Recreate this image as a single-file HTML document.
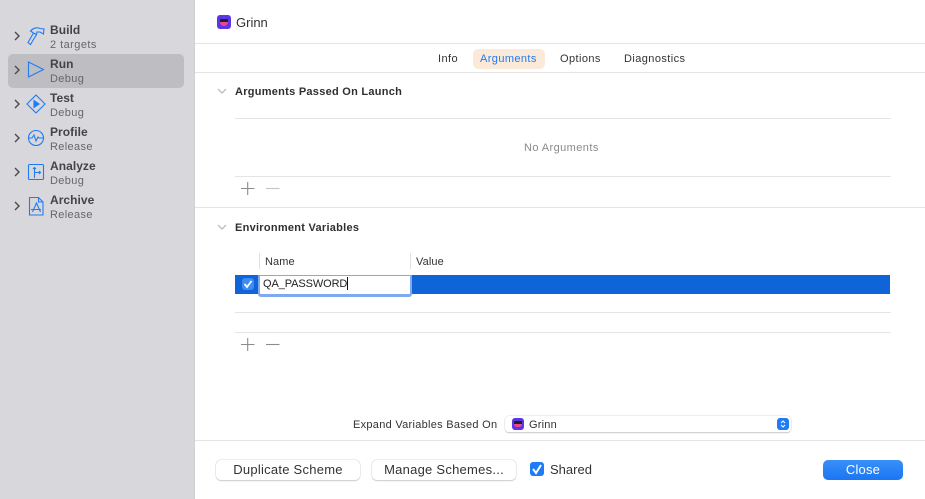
<!DOCTYPE html>
<html><head><meta charset="utf-8">
<style>
html,body{margin:0;padding:0}
body{width:925px;height:499px;overflow:hidden;position:relative;background:#fff;font-family:"Liberation Sans",sans-serif;color:#303030}
.a{position:absolute;white-space:nowrap}
.hl{position:absolute;height:1px;background:#e4e4e4}
#side{position:absolute;left:0;top:0;width:194px;height:499px;background:#d8d7dc;border-right:1px solid #cfcfd1}
.t{position:absolute;left:50px;font-size:12px;font-weight:bold;color:#444;line-height:14px;letter-spacing:.05px}
.s{position:absolute;left:50px;font-size:11px;color:#67676a;line-height:13px;letter-spacing:.35px}
.h{font-size:11px;font-weight:bold;color:#2f2f2f;letter-spacing:.27px}
svg{position:absolute;overflow:visible}
.btn{position:absolute;top:460px;height:20px;background:#fff;border-radius:5px;box-shadow:0 0 0 .5px #d8d8d8,0 1px 1px #bdbdbd;font-size:13px;line-height:20px;text-align:center;color:#333;letter-spacing:.25px}
.tab{position:absolute;top:52px;font-size:11px;line-height:14px;color:#333;letter-spacing:.42px}
</style></head><body>
<div id="side">
<div class="a" style="left:8px;top:54px;width:176px;height:34px;background:#bebdc2;border-radius:5px"></div>
</div>

<svg style="left:0;top:0" width="60" height="230" fill="none" stroke="#4a4a4a" stroke-width="1.4">
<path d="M15 32l4 4-4 4M15 66l4 4-4 4M15 100l4 4-4 4M15 134l4 4-4 4M15 168l4 4-4 4M15 202l4 4-4 4"/>
<g stroke="#1f7cf5" stroke-width="1.1">
<path d="M33.500 33L28 42.500l2.500 2L36.500 34.500"/>
<path d="M30.500 31C33 28 37 27 40 28.500L44 29l-.5 5-3.500-2-3 0-.5 2.500-3-1.500z"/>
<path d="M28.500 62v15l15-7.500z"/>
<path d="M36 95l9 9-9 9-9-9z"/><path d="M34 100.500v7l5-3.500z" fill="#1f7cf5"/>
<circle cx="36" cy="138" r="7.500"/><path d="M29 138h3l2-3 2 6 2-4 1 1h4"/>
<rect x="28.500" y="164.500" width="15" height="15" rx="1"/><path d="M34.500 178v-10.500M33 169l1.500-1.500 1.500 1.500M34.500 172.500H40.500M39 171l1.500 1.500-1.500 1.500"/>
<path d="M29.500 197.500h9l4.500 4.500v13H29.500zM38.500 197.500v4.500h4.500M32.500 212l4-9 4 9M31 209.500h10"/>
</g></svg>

<div class="t" style="top:23px">Build</div><div class="s" style="top:39px;letter-spacing:.45px">2 targets</div>
<div class="t" style="top:57px">Run</div><div class="s" style="top:73px">Debug</div>
<div class="t" style="top:91px">Test</div><div class="s" style="top:107px">Debug</div>
<div class="t" style="top:125px">Profile</div><div class="s" style="top:141px">Release</div>
<div class="t" style="top:159px">Analyze</div><div class="s" style="top:175px">Debug</div>
<div class="t" style="top:193px">Archive</div><div class="s" style="top:209px">Release</div>

<div class="a" style="left:217px;top:15px;width:14px;height:14px;border-radius:3px;background:#5a36e6"></div>
<div class="a" style="left:220px;top:19px;width:8px;height:3px;background:#222"></div>
<div class="a" style="left:220px;top:22px;width:8px;height:4px;border-radius:0 0 4px 4px;background:#e8488f"></div>
<div class="a" style="left:236px;top:15px;font-size:13px;line-height:15px;color:#333">Grinn</div>

<div class="hl" style="left:195px;top:43px;width:730px"></div>
<div class="hl" style="left:195px;top:72px;width:730px"></div>
<div class="a" style="left:473px;top:49px;width:72px;height:20px;border-radius:5px;background:#fbe9da"></div>
<div class="tab" style="left:438px">Info</div>
<div class="tab" style="left:480px;color:#1f7cf5;letter-spacing:.4px">Arguments</div>
<div class="tab" style="left:560px">Options</div>
<div class="tab" style="left:624px">Diagnostics</div>

<svg style="left:0;top:0" width="925" height="499" fill="none" stroke="#b5b5b5" stroke-width="1.2">
<path d="M218 89l4 4 4-4M218 225l4 4 4-4"/>
</svg>
<div class="a h" style="left:235px;top:85px;line-height:14px">Arguments Passed On Launch</div>
<div class="hl" style="left:235px;top:118px;width:656px"></div>
<div class="a" style="left:524px;top:141px;font-size:11px;line-height:14px;color:#8a8a8a;letter-spacing:.42px">No Arguments</div>
<div class="hl" style="left:235px;top:176px;width:656px"></div>
<svg style="left:0;top:0" width="925" height="499" fill="none" stroke="#8c8c8c" stroke-width="1.1">
<path d="M241 188.500h13.500M247.700 182v13"/><path d="M266 188.500h13.500" stroke="#c4c4c4"/>
<path d="M241 344.500h13.500M247.700 338v13"/><path d="M266 344.500h13.500"/>
</svg>
<div class="hl" style="left:195px;top:207px;width:730px"></div>

<div class="a h" style="left:235px;top:221px;line-height:14px">Environment Variables</div>
<div class="a" style="left:259px;top:253px;width:1px;height:16px;background:#e0e0e0"></div>
<div class="a" style="left:410px;top:253px;width:1px;height:16px;background:#e0e0e0"></div>
<div class="a" style="left:265px;top:255px;font-size:11px;line-height:14px;color:#333;letter-spacing:.1px">Name</div>
<div class="a" style="left:416px;top:255px;font-size:11px;line-height:14px;color:#333;letter-spacing:.1px">Value</div>
<div class="a" style="left:235px;top:275px;width:655px;height:19px;background:#0f64d8"></div>
<div class="a" style="left:242px;top:278px;width:12px;height:12px;border-radius:3px;background:#3d8cf3"></div>
<svg style="left:0;top:0" width="925" height="499" fill="none" stroke="#fff" stroke-width="1.8"><path d="M244.500 284l2.500 3 4.500-6"/></svg>
<div class="a" style="left:258px;top:275px;width:154px;height:22px;background:#7fabee;border-radius:0 0 3px 3px"></div>
<div class="a" style="left:260px;top:276px;width:150px;height:18px;background:#fff"></div>
<div class="a" style="left:263px;top:277px;font-size:11px;line-height:14px;color:#222;letter-spacing:-.1px">QA_PASSWORD</div>
<div class="a" style="left:347px;top:277px;width:1px;height:13px;background:#111"></div>
<div class="hl" style="left:235px;top:312px;width:656px"></div>
<div class="hl" style="left:235px;top:332px;width:656px"></div>

<div class="a" style="left:353px;top:418px;font-size:11px;line-height:14px;color:#333;letter-spacing:.28px">Expand Variables Based On</div>
<div class="a" style="left:505px;top:416px;width:286px;height:16px;border-radius:4px;background:#fff;box-shadow:0 0 0 .5px #ddd,0 1px 1px #b5b5b5"></div>
<div class="a" style="left:512px;top:418px;width:12px;height:12px;border-radius:3px;background:#5a36e6"></div>
<div class="a" style="left:514px;top:421px;width:8px;height:3px;background:#222"></div>
<div class="a" style="left:514px;top:424px;width:8px;height:3px;border-radius:0 0 4px 4px;background:#e8488f"></div>
<div class="a" style="left:529px;top:418px;font-size:11px;line-height:14px;color:#333;letter-spacing:.2px">Grinn</div>
<div class="a" style="left:777px;top:418px;width:12px;height:12px;border-radius:3px;background:#1f7cf5"></div>
<svg style="left:0;top:0" width="925" height="499" fill="none" stroke="#fff" stroke-width="1"><path d="M781 423l2-2 2 2M781 425l2 2 2-2"/></svg>

<div class="hl" style="left:195px;top:440px;width:730px"></div>
<div class="btn" style="left:216px;width:144px">Duplicate Scheme</div>
<div class="btn" style="left:372px;width:144px">Manage Schemes...</div>
<div class="a" style="left:530px;top:462px;width:14px;height:14px;border-radius:3px;background:#1f7cf5"></div>
<svg style="left:0;top:0" width="925" height="499" fill="none" stroke="#fff" stroke-width="2"><path d="M533 469l3 4 5-8"/></svg>
<div class="a" style="left:550px;top:462px;font-size:13px;line-height:15px;color:#333">Shared</div>
<div class="a" style="left:823px;top:460px;width:80px;height:20px;border-radius:5px;background:linear-gradient(#3a90f8,#1a76f2);color:#fff;font-size:13px;line-height:20px;text-align:center;letter-spacing:.2px">Close</div>
</body></html>
